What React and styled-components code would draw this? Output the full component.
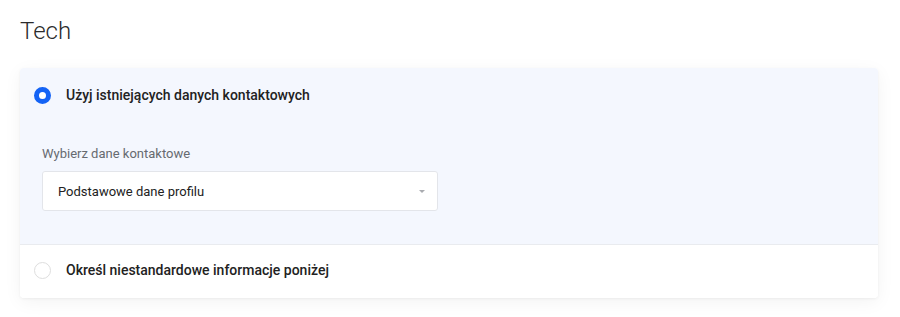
import React from 'react'
import styled, { createGlobalStyle } from 'styled-components'

const GlobalStyle = createGlobalStyle`
  body {
    margin: 0;
    background: #ffffff;
    font-family: Roboto, "Noto Sans", Arial, sans-serif;
    -webkit-font-smoothing: antialiased;
  }
`

const Page = styled.div`
  padding: 16px 22px 20px 20px;
`

const Title = styled.h1`
  margin: 0 0 22px 0;
  font-size: 24px;
  line-height: 30px;
  font-weight: 300;
  color: #2b2b2b;
`

const Card = styled.div`
  background: #fff;
  border-radius: 4px;
  box-shadow: 0 1px 3px rgba(0, 0, 0, 0.05), 0 4px 18px rgba(0, 0, 0, 0.05);
  overflow: hidden;
`

const Section = styled.div`
  background: ${p => (p.active ? '#f4f7fe' : '#ffffff')};
  border-top: ${p => (p.divided ? '1px solid #e9ebef' : 'none')};
  padding: ${p => (p.active ? '19px 22px 33px 14px' : '17px 22px 19px 14px')};
`

const Option = styled.label`
  display: flex;
  align-items: center;
  gap: 15px;
  font-size: 14px;
  font-weight: 500;
  color: #222;
  line-height: 17px;
`

const Radio = styled.span`
  box-sizing: border-box;
  width: 17px;
  height: 17px;
  flex: none;
  border-radius: 50%;
  background: #fff;
  border: ${p => (p.checked ? '5px solid #1463f5' : '1.5px solid #dedede')};
`

const Field = styled.div`
  margin: 42px 0 0 8px;
  width: 396px;
`

const FieldLabel = styled.div`
  font-size: 13px;
  color: #666a70;
  line-height: 16px;
  margin-bottom: 9px;
`

const Select = styled.div`
  box-sizing: border-box;
  height: 40px;
  background: #fff;
  border: 1px solid #e3e5ea;
  border-radius: 3px;
  display: flex;
  align-items: center;
  justify-content: space-between;
  padding: 0 12px 0 15px;
  font-size: 13px;
  color: #222;
`

const Caret = styled.span`
  width: 0;
  height: 0;
  border-left: 3.5px solid transparent;
  border-right: 3.5px solid transparent;
  border-top: 3.5px solid #a9abb0;
`

export default function App() {
  return (
    <Page>
      <GlobalStyle />
      <Title>Tech</Title>
      <Card>
        <Section active>
          <Option>
            <Radio checked />
            Użyj istniejących danych kontaktowych
          </Option>
          <Field>
            <FieldLabel>Wybierz dane kontaktowe</FieldLabel>
            <Select>
              Podstawowe dane profilu
              <Caret />
            </Select>
          </Field>
        </Section>
        <Section divided>
          <Option>
            <Radio />
            Określ niestandardowe informacje poniżej
          </Option>
        </Section>
      </Card>
    </Page>
  )
}
